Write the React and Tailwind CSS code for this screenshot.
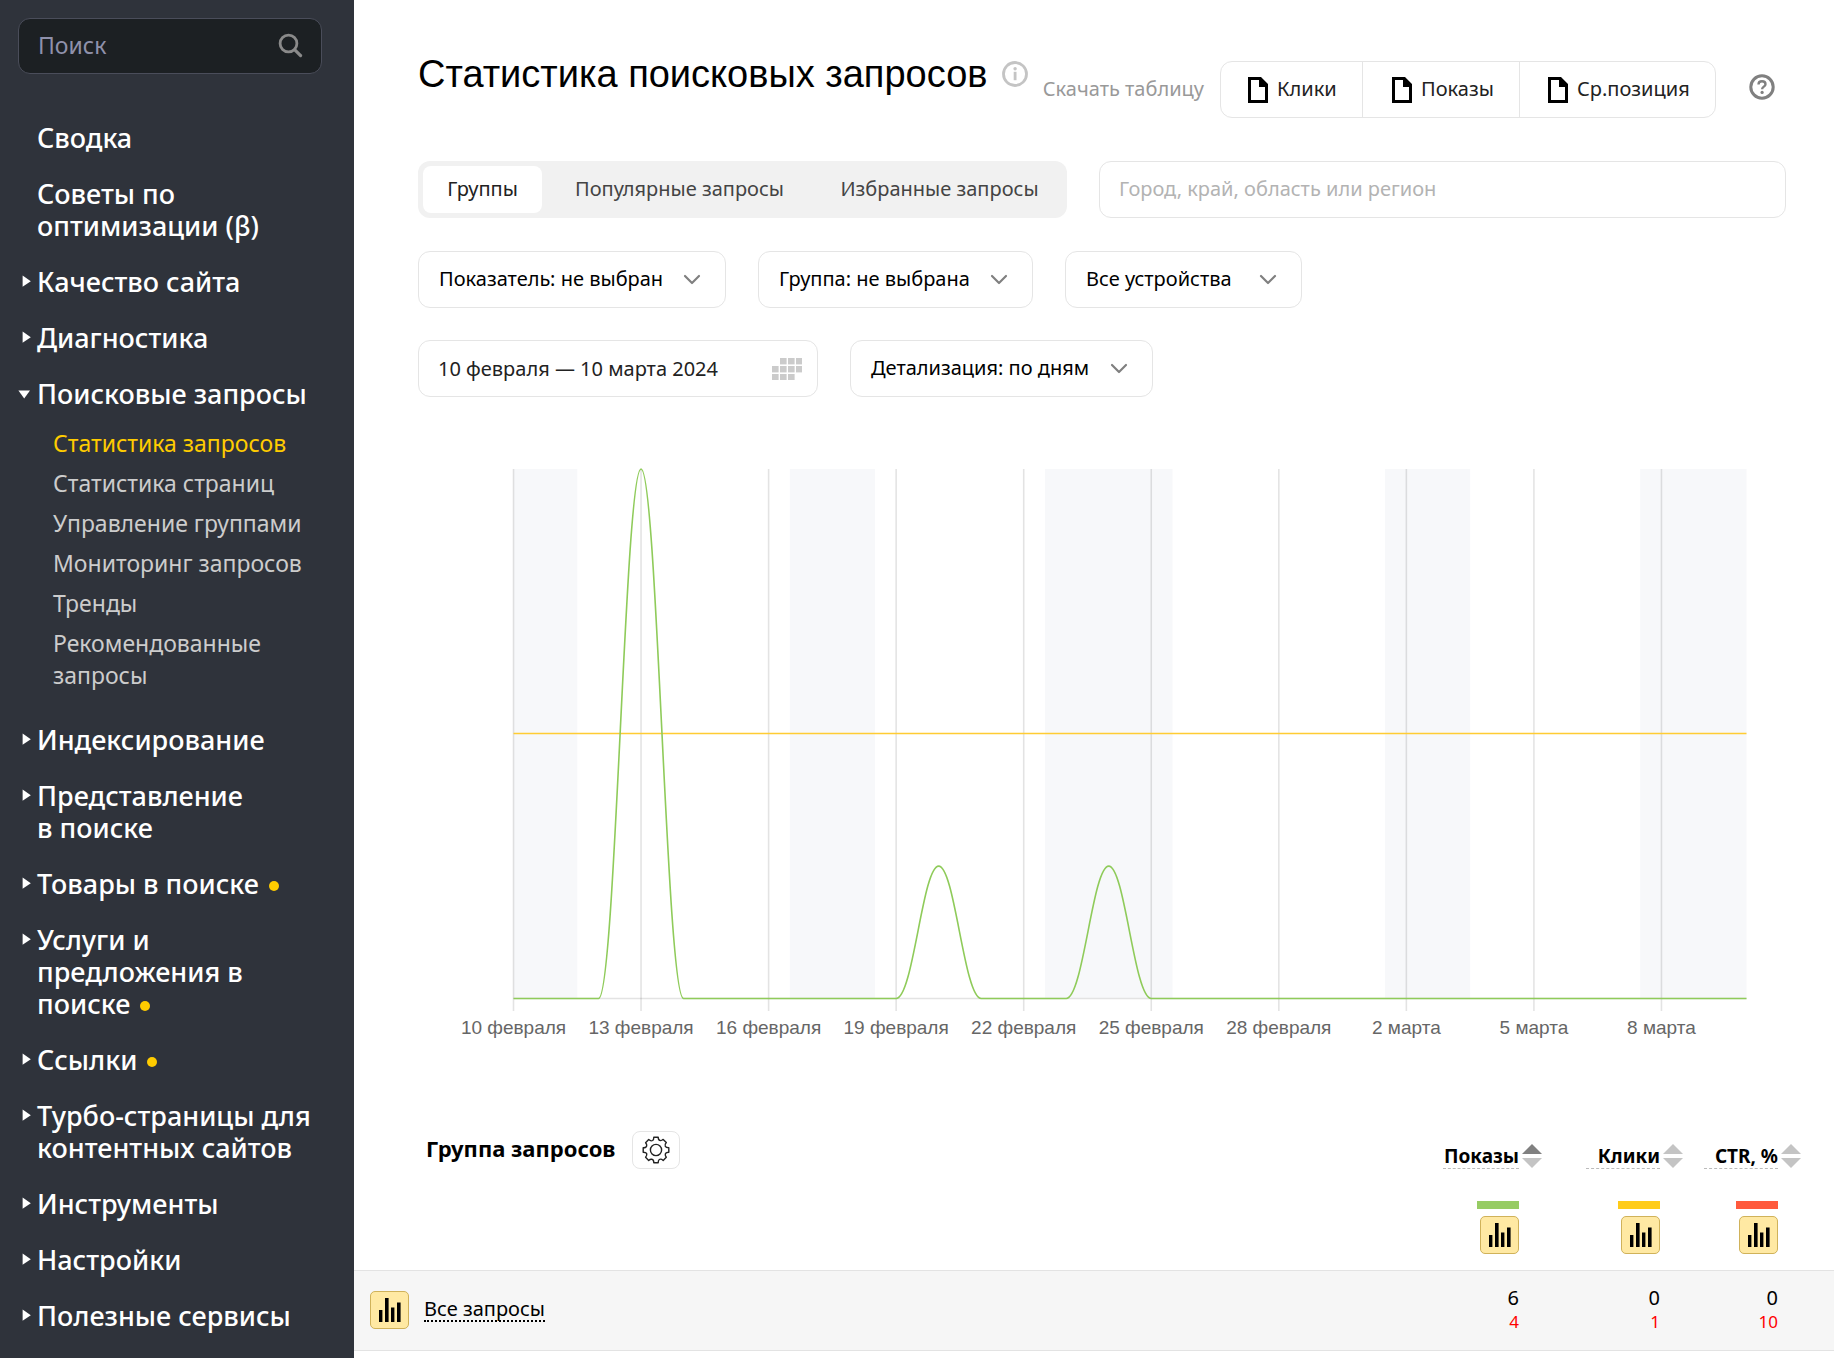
import { Fragment } from "react";

const NAV = [
  { label: "Сводка", plain: true },
  { label: "Советы по оптимизации (β)", plain: true },
  { label: "Качество сайта" },
  { label: "Диагностика" },
  {
    label: "Поисковые запросы",
    open: true,
    children: [
      "Статистика запросов",
      "Статистика страниц",
      "Управление группами",
      "Мониторинг запросов",
      "Тренды",
      "Рекомендованные запросы",
    ],
  },
  { label: "Индексирование" },
  { label: "Представление в\u00a0поиске" },
  { label: "Товары в поиске", dot: true },
  { label: "Услуги и предложения в поиске", dot: true },
  { label: "Ссылки", dot: true },
  { label: "Турбо-страницы для контентных сайтов" },
  { label: "Инструменты" },
  { label: "Настройки" },
  { label: "Полезные сервисы" },
];

function Sidebar() {
  return (
    <aside className="w-[354px] shrink-0 bg-[#2f333b] px-[18px] py-[18px]">
      <label className="flex h-[56px] w-[304px] items-center rounded-xl border border-[#4a4d5a] bg-[#1c2023] pr-[18px] pl-[19px]">
        <input
          type="text"
          aria-label="Поиск"
          placeholder="Поиск"
          className="min-w-0 flex-1 bg-transparent pb-[2px] text-[23px] text-white outline-none placeholder:text-[#8f91ab]"
        />
        <svg width="25" height="26" viewBox="0 0 25 26" fill="none" stroke="#8a8a8a" strokeWidth="2.8" strokeLinecap="round">
          <circle cx="10.5" cy="10.5" r="8.4" />
          <path d="M16.8 16.8l5.8 5.8" strokeWidth="3.2" />
        </svg>
      </label>
      <nav className="mt-12">
        {NAV.map((item) => (
          <div key={item.label} className={item.open ? "mb-[33px]" : "mb-6"}>
            <a href="#" className="flex items-start text-[27px] leading-8 font-medium text-white">
              <span className="flex h-8 w-[19px] shrink-0 items-center">
                {!item.plain && !item.open && (
                  <svg width="14" height="14" viewBox="0 0 14 14" fill="#fff">
                    <path d="M4.6 .6l8.2 5.6-8.2 5.6z" />
                  </svg>
                )}
                {item.open && (
                  <svg width="14" height="14" viewBox="0 0 14 14" fill="#fff">
                    <path d="M0.4 3.4h11.6l-5.8 8z" />
                  </svg>
                )}
              </span>
              <span className="w-[290px]">
                {item.label}
                {item.dot && <span className="ml-[10px] inline-block size-[10px] rounded-full bg-[#ffcc00] align-[3px]" />}
              </span>
            </a>
            {item.children && (
              <ul className="mt-[17px] flex flex-col gap-2 pl-[35px]">
                {item.children.map((c, i) => (
                  <li key={c}>
                    <a
                      href="#"
                      className={`block w-[260px] text-[23px] leading-8 ${i === 0 ? "text-[#ffcc00]" : "text-[#cccccc]"}`}
                    >
                      {c}
                    </a>
                  </li>
                ))}
              </ul>
            )}
          </div>
        ))}
      </nav>
    </aside>
  );
}

function FileIcon() {
  return (
    <svg width="20" height="26" viewBox="0 0 20 26">
      <path fillRule="evenodd" fill="#000" d="M0 0h13l7 7v19H0zM3 3v20h14V10h-6V3z" />
    </svg>
  );
}

function Chevron() {
  return (
    <svg width="18" height="11" viewBox="0 0 18 11" fill="none" stroke="#808080" strokeWidth="2.2" strokeLinecap="round" strokeLinejoin="round">
      <path d="M2 2l7 7 7-7" />
    </svg>
  );
}

function Dropdown({ label, width }) {
  return (
    <button
      type="button"
      aria-haspopup="listbox"
      className={`flex h-[57px] items-center justify-between rounded-xl border border-[#e5e5e5] bg-white pr-6 pl-5 text-[20px] whitespace-nowrap text-black ${width}`}
    >
      <span className="pb-[2px]">{label}</span>
      <Chevron />
    </button>
  );
}

function CalendarIcon() {
  return (
    <svg width="30" height="22" viewBox="0 0 30 22" fill="#cbcbcb">
      {[8, 16, 24].map((x) => <rect key={x} x={x} y="0" width="6.6" height="6.4" />)}
      {[0, 8, 16, 24].map((x) => <rect key={x} x={x} y="8" width="6.6" height="6.4" />)}
      {[0, 8, 16].map((x) => <rect key={x} x={x} y="16" width="6.6" height="6" />)}
    </svg>
  );
}

function Download({ label, className }) {
  return (
    <button type="button" className={`flex items-center gap-[9px] ${className}`}>
      <FileIcon />
      <span className="pb-[2px]">{label}</span>
    </button>
  );
}

function Header() {
  return (
    <div className="flex items-start pr-[59px]">
      <h1 className="font-['Liberation_Sans',sans-serif] text-[38px] leading-[48px] whitespace-nowrap text-black">
        Статистика поисковых запросов
      </h1>
      <svg className="mt-[11px] ml-[15px] shrink-0" width="26" height="26" viewBox="0 0 26 26">
        <circle cx="13" cy="13" r="11.5" fill="none" stroke="#c4c4c4" strokeWidth="2.8" />
        <rect x="11.7" y="10.8" width="2.8" height="8.4" fill="#c4c4c4" />
        <circle cx="13.1" cy="7.8" r="1.7" fill="#c4c4c4" />
      </svg>
      <div className="mt-[11px] ml-auto flex items-center">
        <span className="mr-4 pb-[2px] text-[20px] whitespace-nowrap text-[#999]">Скачать таблицу</span>
        <div className="flex h-[57px] divide-x divide-[#e5e5e5] rounded-xl border border-[#e5e5e5] text-[20px] text-[#222]">
          <Download label="Клики" className="w-[142px] pl-[27px]" />
          <Download label="Показы" className="w-[157px] pl-[29px]" />
          <Download label="Ср.позиция" className="w-[195px] pl-[28px]" />
        </div>
        <button type="button" aria-label="Помощь" className="mb-[6px] ml-[33px]">
          <svg width="26" height="26" viewBox="0 0 26 26" fill="none" stroke="#808080">
            <circle cx="13" cy="13" r="11.2" strokeWidth="3" />
            <path d="M9.5 10.4c0-2 1.5-3.2 3.5-3.2s3.5 1.2 3.500 3c0 2.400-3.400 2.500-3.400 5" strokeWidth="2.4" />
            <circle cx="13.1" cy="18.4" r="1.6" fill="#808080" stroke="none" />
          </svg>
        </button>
      </div>
    </div>
  );
}

function Filters() {
  return (
    <>
      <div className="mt-[43px] flex items-start gap-8 pr-12">
        <div role="tablist" className="flex h-[57px] shrink-0 items-center rounded-xl bg-[#f1f1f1] p-[5px] text-[20px] text-[#444]">
          <button type="button" role="tab" aria-selected="true" className="h-full w-[119px] rounded-lg bg-white pb-[2px] text-[#222]">Группы</button>
          <button type="button" role="tab" aria-selected="false" className="w-[275px] pb-[2px]">Популярные запросы</button>
          <button type="button" role="tab" aria-selected="false" className="w-[245px] pb-[2px]">Избранные запросы</button>
        </div>
        <input
          type="text"
          aria-label="Регион"
          placeholder="Город, край, область или регион"
          className="h-[57px] min-w-0 flex-1 rounded-xl border border-[#e5e5e5] px-[19px] pb-[2px] text-[20px] outline-none placeholder:text-[#b3b3b3]"
        />
      </div>
      <div className="mt-[33px] flex gap-8">
        <Dropdown label="Показатель: не выбран" width="w-[308px]" />
        <Dropdown label="Группа: не выбрана" width="w-[275px]" />
        <Dropdown label="Все устройства" width="w-[237px]" />
      </div>
      <div className="mt-8 flex gap-8">
        <button type="button" className="flex h-[57px] w-[400px] items-center justify-between rounded-xl border border-[#e5e5e5] pr-[15px] pl-[19px] text-[20px] text-[#222]">
          10 февраля — 10 марта 2024
          <CalendarIcon />
        </button>
        <Dropdown label="Детализация: по дням" width="w-[303px]" />
      </div>
    </>
  );
}

const X0 = 159.5;
const STEP = 1233 / 29;
const TOP = 9;
const BASE = 538.5;
const dayX = (d) => X0 + d * STEP;
const BANDS = [[0, 1.5], [6.5, 8.5], [12.5, 15.5], [20.5, 22.5], [26.5, 29]];
const TICKS = ["10 февраля", "13 февраля", "16 февраля", "19 февраля", "22 февраля", "25 февраля", "28 февраля", "2 марта", "5 марта", "8 марта"];
const PEAKS = [[3, 4], [10, 1], [14, 1]];

function impressionsPath() {
  let d = `M${dayX(0)} ${BASE}`;
  PEAKS.forEach(([day, value]) => {
    const y = BASE - ((BASE - TOP) * value) / 4;
    const a = dayX(day - 1);
    const m = dayX(day);
    const b = dayX(day + 1);
    d += `H${a}C${a + STEP * 0.4} ${BASE} ${m - STEP * 0.38} ${y} ${m} ${y}S${b - STEP * 0.4} ${BASE} ${b} ${BASE}`;
  });
  return `${d}H${dayX(29)}`;
}

function Chart() {
  return (
    <svg className="mt-[63px] block w-full" viewBox="0 0 1480 590" role="img" aria-label="График показов и кликов по дням">
      {BANDS.map(([a, b]) => (
        <rect key={a} x={dayX(a)} y={TOP} width={(b - a) * STEP} height={BASE - TOP} fill="#f7f8fa" />
      ))}
      <path d={`M${dayX(0)} ${BASE}H${dayX(29)}`} stroke="#e3e3e3" strokeWidth="1.5" />
      {TICKS.map((t, i) => (
        <Fragment key={t}>
          <path d={`M${dayX(i * 3)} ${TOP}V551`} stroke="#000" strokeOpacity="0.11" strokeWidth="1.6" />
          <text x={dayX(i * 3)} y="574" textAnchor="middle" fontSize="19" fill="#666" fontFamily="'Liberation Sans', sans-serif">{t}</text>
        </Fragment>
      ))}
      <path d={`M${dayX(0)} 273.5H${dayX(29)}`} stroke="#ffcc33" strokeWidth="1.7" />
      <path d={impressionsPath()} fill="none" stroke="#8fcb5a" strokeWidth="1.6" />
    </svg>
  );
}

function BarsButton({ label }) {
  return (
    <button type="button" aria-label={label} className="flex h-[38px] w-[39px] items-center justify-center rounded-[5px] border border-[#d0b25a] bg-[#ffe9a3]">
      <svg width="23" height="24" viewBox="0 0 23 24" fill="#000">
        <path d="M1 12h3.400v12H1zM7 0h3.600v24H7zM13 9.500h3.400V24H13zM19 4.500h3.600V24H19z" />
      </svg>
    </button>
  );
}

function SortIcon({ active }) {
  return (
    <svg width="20" height="24" viewBox="0 0 20 24" fill="#c4c4c4">
      <path d="M0 10l10-10 10 10z" fill={active ? "#808080" : "#c4c4c4"} />
      <path d="M0 14h20L10 24z" />
    </svg>
  );
}

const COLUMNS = [
  { label: "Показы", color: "bg-[#97cc64]", cell: "pr-[24px]", underline: "min-w-[76px]", value: 6, change: 4, active: true },
  { label: "Клики", color: "bg-[#ffcc1a]", cell: "pr-[24px]", underline: "min-w-[74px]", value: 0, change: 1 },
  { label: "CTR, %", color: "bg-[#ff5a3d]", cell: "pr-[56px]", underline: "min-w-[74px]", value: 0, change: 10 },
];

function Results() {
  return (
    <table className="mt-[69px] w-full table-fixed border-collapse text-[20px]">
      <colgroup>
        <col />
        <col className="w-[160px]" />
        <col className="w-[141px]" />
        <col className="w-[150px]" />
      </colgroup>
      <thead>
        <tr className="h-[151px] align-top">
          <th scope="col" className="pt-3 pl-[72px] text-left">
            <div className="flex items-center gap-4 text-[22px] leading-[34px] font-bold text-black">
              <span className="pb-[4px]">Группа запросов</span>
              <button type="button" aria-label="Настройки таблицы" className="flex h-[38px] w-12 items-center justify-center rounded-lg border border-[#e5e5e5]">
                <svg width="28" height="28" viewBox="0 0 28 28" fill="none" stroke="#222" strokeWidth="1.4" strokeLinejoin="round">
                  <circle cx="14" cy="14" r="5.6" />
                  <path d="M11.8 1.2h4.4c0 2.6 1.3 3.4 2.4 3.4 1 0 1.6-.8 2.6-1.2l3.1 3.1c-1.8 1.9-1.5 3-1 3.9.5.9 1.5 1.4 3.5 1.4v4.4c-2.4 0-3.3 1-3.5 2-.2 1.1.2 2.1 1 3.1l-3.1 3.1c-1.9-1.7-3.1-1.4-3.9-.9-.8.5-1.1 1.5-1.1 3.3h-4.4c0-2.4-.9-3.3-2-3.5-1-.2-2.1.2-3.1 1.100l-3.100-3.100c1.700-1.900 1.400-3 1-3.900-.5-.8-1.500-1.200-3.400-1.200v-4.400c2.400 0 3.300-1 3.500-2 .2-1.100-.2-2.100-1.100-3.100l3.100-3.100c1.900 1.700 3 1.400 3.900.9.800-.5 1.200-1.500 1.200-3.300z" />
                </svg>
              </button>
            </div>
          </th>
          {COLUMNS.map((c) => (
            <th key={c.label} scope="col" className={`pt-[25px] text-black ${c.cell}`}>
              <div className="flex flex-col items-end">
                <button type="button" className="-mr-[23px] flex items-start gap-[3px] text-[19px] font-bold">
                  <span className={`border-b border-dashed border-[#bbb] text-right leading-6 ${c.underline}`}>{c.label}</span>
                  <SortIcon active={c.active} />
                </button>
                <span className={`mt-8 mb-[7px] h-2 w-[42px] ${c.color}`} />
                <BarsButton label={`График: ${c.label}`} />
              </div>
            </th>
          ))}
        </tr>
      </thead>
      <tbody>
        <tr className="h-[80px] border-y border-[#e3e3e3] bg-[#f6f6f6]">
          <td className="pl-4">
            <div className="flex items-center gap-[15px]">
              <BarsButton label="График: Все запросы" />
              <a href="#" className="border-b-2 border-dotted border-black leading-[22px] text-black">Все запросы</a>
            </div>
          </td>
          {COLUMNS.map((c) => (
            <td key={c.label} className={`text-right leading-6 text-black ${c.cell}`}>
              {c.value}
              <div className="text-[17px] leading-6 text-[#f00]">{c.change}</div>
            </td>
          ))}
        </tr>
      </tbody>
    </table>
  );
}

export default function App() {
  return (
    <div className="flex min-h-screen bg-white font-['Noto_Sans',sans-serif]">
      <Sidebar />
      <main className="min-w-0 flex-1 pt-[50px]">
        <div className="pl-16">
          <Header />
          <Filters />
        </div>
        <Chart />
        <Results />
      </main>
    </div>
  );
}
